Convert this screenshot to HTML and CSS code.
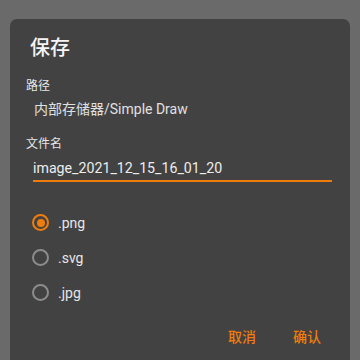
FILE: index.html
```html
<!DOCTYPE html>
<html lang="zh">
<head>
<meta charset="utf-8">
<link rel="stylesheet" href="styles.css">
</head>
<body>
<div class="dialog">
  <div class="title">保存</div>
  <div class="label">路径</div>
  <div class="path">内部存储器/Simple Draw</div>
  <div class="label label-name">文件名</div>
  <div class="input">image_2021_12_15_16_01_20</div>
  <div class="radios">
    <div class="radio checked"><span class="dot"></span><span class="rtext">.png</span></div>
    <div class="radio"><span class="dot"></span><span class="rtext">.svg</span></div>
    <div class="radio"><span class="dot"></span><span class="rtext">.jpg</span></div>
  </div>
  <div class="actions">
    <span class="btn">取消</span>
    <span class="btn">确认</span>
  </div>
</div>
</body>
</html>
```
FILE: styles.css
```css
html, body {
  margin: 0;
  padding: 0;
  background: #6a6a6a;
}
body {
  font-family: "Roboto", "Noto Sans CJK SC", sans-serif;
  box-sizing: border-box;
  height: 360px;
  overflow: hidden;
  padding-top: 19px;
  padding-left: 10px;
}
.dialog {
  width: 340px;
  height: 341px;
  background: #424242;
  border-radius: 7px 7px 0 0;
  box-sizing: border-box;
  padding: 15px 0 0 0;
}
.title {
  font-size: 20px;
  line-height: 28px;
  color: #f4f4f4;
  font-weight: 500;
  padding-left: 20px;
}
.label {
  font-size: 12px;
  line-height: 16px;
  color: #e6e6e6;
  padding-left: 16px;
  margin-top: 16px;
}
.path {
  font-size: 14px;
  line-height: 20px;
  color: #e0e0e0;
  padding-left: 24px;
  margin-top: 5px;
}
.label-name {
  margin-top: 17px;
}
.input {
  margin: 5px 0 0 23px;
  width: 299px;
  font-size: 14.2px;
  line-height: 22px;
  color: #ededed;
  padding-bottom: 1px;
  border-bottom: 2px solid #ee7b0c;
}
.radios {
  margin-top: 23px;
  padding-left: 22px;
  display: flex;
  flex-direction: column;
}
.radio {
  height: 35px;
  display: flex;
  align-items: center;
  gap: 9px;
}
.dot {
  width: 13px;
  height: 13px;
  border: 2px solid #8c8c8c;
  border-radius: 50%;
  position: relative;
  flex: none;
}
.checked .dot {
  border-color: #ef7d0d;
}
.checked .dot::after {
  content: "";
  position: absolute;
  left: 2.5px;
  top: 2.5px;
  width: 8px;
  height: 8px;
  border-radius: 50%;
  background: #ef7d0d;
}
.rtext {
  font-size: 14px;
  color: #e6e6e6;
}
.actions {
  display: flex;
  justify-content: flex-end;
  gap: 37px;
  padding-right: 29px;
  margin-top: 17px;
}
.btn {
  font-size: 14px;
  line-height: 20px;
  color: #ef7d0d;
  font-weight: 500;
}
```
